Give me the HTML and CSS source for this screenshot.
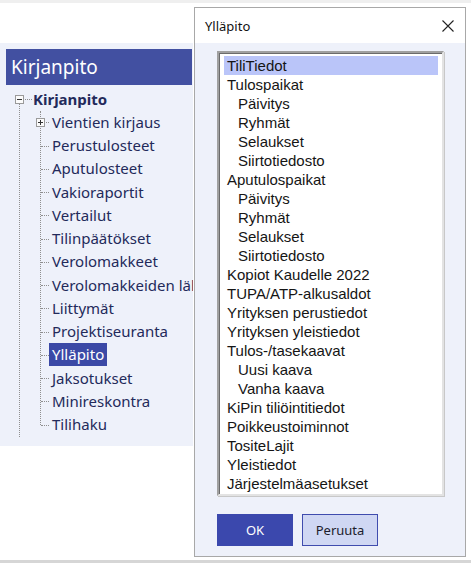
FILE: index.html
```html
<!DOCTYPE html>
<html lang="fi">
<head>
<meta charset="utf-8">
<title>Kirjanpito</title>
<link rel="stylesheet" href="styles.css">
</head>
<body>
<div class="screen">
  <div class="topline"></div>
  <div class="panel">
    <div class="panel-header">Kirjanpito</div>
    <div class="tree">
      <div class="row root">
        <svg class="box" width="9" height="9" viewBox="0 0 9 9"><rect x="0.5" y="0.5" width="8" height="8" fill="#fbfbfb" stroke="#9a9a9a"/><path d="M2 4.5h5" stroke="#333" stroke-width="1"/></svg>
        <span class="hconn root-conn"></span>
        <span class="label bold">Kirjanpito</span>
      </div>
      <div class="kids">
        <div class="row child has-box">
          <svg class="box kid-box" width="9" height="9" viewBox="0 0 9 9"><rect x="0.5" y="0.5" width="8" height="8" fill="#fbfbfb" stroke="#9a9a9a"/><path d="M2 4.5h5M4.5 2v5" stroke="#333" stroke-width="1"/></svg>
          <span class="label">Vientien kirjaus</span>
        </div>
        <div class="row child"><span class="label">Perustulosteet</span></div>
        <div class="row child"><span class="label">Aputulosteet</span></div>
        <div class="row child"><span class="label">Vakioraportit</span></div>
        <div class="row child"><span class="label">Vertailut</span></div>
        <div class="row child"><span class="label">Tilinpäätökset</span></div>
        <div class="row child"><span class="label">Verolomakkeet</span></div>
        <div class="row child"><span class="label">Verolomakkeiden lähetys</span></div>
        <div class="row child"><span class="label">Liittymät</span></div>
        <div class="row child"><span class="label">Projektiseuranta</span></div>
        <div class="row child"><span class="label selected">Ylläpito</span></div>
        <div class="row child"><span class="label">Jaksotukset</span></div>
        <div class="row child"><span class="label">Minireskontra</span></div>
        <div class="row child"><span class="label">Tilihaku</span></div>
      </div>
    </div>
  </div>
  <div class="bottomline"></div>

  <div class="dialog">
    <div class="dialog-title">
      <span class="title-text">Ylläpito</span>
      <svg class="close" width="12" height="12" viewBox="0 0 12 12"><path d="M0.5 0.5L11.5 11.5M11.5 0.5L0.5 11.5" stroke="#222" stroke-width="1.1" fill="none"/></svg>
    </div>
    <div class="dialog-body">
      <ul class="listbox">
        <li class="item sel">TiliTiedot</li>
        <li class="item">Tulospaikat</li>
        <li class="item sub">Päivitys</li>
        <li class="item sub">Ryhmät</li>
        <li class="item sub">Selaukset</li>
        <li class="item sub">Siirtotiedosto</li>
        <li class="item">Aputulospaikat</li>
        <li class="item sub">Päivitys</li>
        <li class="item sub">Ryhmät</li>
        <li class="item sub">Selaukset</li>
        <li class="item sub">Siirtotiedosto</li>
        <li class="item">Kopiot Kaudelle 2022</li>
        <li class="item">TUPA/ATP-alkusaldot</li>
        <li class="item">Yrityksen perustiedot</li>
        <li class="item">Yrityksen yleistiedot</li>
        <li class="item">Tulos-/tasekaavat</li>
        <li class="item sub">Uusi kaava</li>
        <li class="item sub">Vanha kaava</li>
        <li class="item">KiPin tiliöintitiedot</li>
        <li class="item">Poikkeustoiminnot</li>
        <li class="item">TositeLajit</li>
        <li class="item">Yleistiedot</li>
        <li class="item">Järjestelmäasetukset</li>
      </ul>
      <div class="buttons">
        <button class="btn btn-ok">OK</button>
        <button class="btn btn-cancel">Peruuta</button>
      </div>
    </div>
  </div>
</div>
</body>
</html>
```

FILE: styles.css
```css
html, body {
  margin: 0;
  padding: 0;
  background: #ffffff;
}
.screen {
  position: relative;
  width: 471px;
  height: 563px;
  overflow: hidden;
  background: #ffffff;
  font-family: "Noto Sans", "Open Sans", sans-serif;
}
.topline {
  height: 3px;
  background: #efefef;
  margin-bottom: 40px;
}
.panel {
  width: 193px;
  height: 403px;
  background: #eef1fa;
  padding-top: 6px;
  box-sizing: border-box;
  overflow: hidden;
}
.panel-header {
  margin-left: 6px;
  width: 186px;
  height: 36px;
  background: #4250a1;
  color: #ffffff;
  font-size: 19px;
  line-height: 36px;
  padding-left: 5px;
  box-sizing: border-box;
  white-space: nowrap;
}
.tree {
  position: relative;
  margin-top: 2.4px;
}
.tree::before {
  content: "";
  position: absolute;
  left: 19px;
  top: 16.5px;
  height: 333px;
  border-left: 1px dotted #8f8f8f;
}
.row {
  position: relative;
  height: 23.25px;
  display: flex;
  align-items: center;
  white-space: nowrap;
  font-size: 15px;
  color: #232a5b;
}
.root {
  padding-left: 15px;
}
.box {
  display: block;
  flex: none;
}
.hconn {
  display: block;
  border-top: 1px dotted #8f8f8f;
}
.root-conn {
  width: 7px;
  margin-left: 1px;
  margin-right: 1px;
}
.bold {
  font-weight: 700;
}
.kids {
  position: relative;
}
.kids::before {
  content: "";
  position: absolute;
  left: 40px;
  top: 0;
  bottom: 11.6px;
  border-left: 1px dotted #8f8f8f;
}
.child {
  padding-left: 52px;
}
.child::before {
  content: "";
  position: absolute;
  left: 41px;
  width: 8px;
  top: 50%;
  border-top: 1px dotted #8f8f8f;
}
.kid-box {
  position: absolute;
  left: 36px;
  top: 7px;
  z-index: 1;
}
.label {
  display: block;
  height: 23px;
  line-height: 23px;
}
.selected {
  background: #3b49a6;
  color: #ffffff;
  padding: 0 3px;
  margin-left: -3px;
}
.bottomline {
  position: absolute;
  left: 0;
  right: 0;
  bottom: 0;
  height: 3px;
  background: #d6d6d6;
}

/* Dialog window */
.dialog {
  position: absolute;
  left: 194px;
  top: 7px;
  width: 272px;
  height: 550px;
  border: 1px solid #a8a8a8;
  box-sizing: border-box;
  display: flex;
  flex-direction: column;
  background: #eef1fa;
}
.dialog-title {
  height: 35px;
  background: #ffffff;
  display: flex;
  align-items: center;
  justify-content: space-between;
  padding: 0 11px 0 10px;
  flex: none;
}
.title-text {
  font-size: 13px;
  color: #111111;
}
.close {
  display: block;
}
.dialog-body {
  flex: 1;
  padding: 8px 0 0 22px;
}
.listbox {
  list-style: none;
  margin: 0;
  padding: 3px 4px 0 5px;
  width: 227px;
  height: 445px;
  box-sizing: border-box;
  background: #ffffff;
  border: 2px solid;
  border-color: #a0a0a0 #e3e3e3 #e3e3e3 #a0a0a0;
  box-shadow: inset 1px 1px 0 #6b6b6b, 1px 1px 0 #c8c8c8;
  font-family: "Liberation Sans", Arial, sans-serif;
  font-size: 15px;
  color: #151515;
}
.item {
  height: 19px;
  line-height: 19px;
  padding-left: 3px;
  white-space: nowrap;
}
.item.sub {
  padding-left: 14px;
}
.item.sel {
  background: #bac5f9;
}
.buttons {
  display: flex;
  gap: 9px;
  margin-top: 18px;
}
.btn {
  width: 76px;
  height: 32px;
  box-sizing: border-box;
  font-family: "Noto Sans", "Open Sans", sans-serif;
  font-size: 13px;
  padding: 0;
  margin: 0;
}
.btn-ok {
  background: #3b48ad;
  color: #ffffff;
  border: 1px solid #3b48ad;
}
.btn-cancel {
  background: #cfd7f3;
  color: #1c1c2c;
  border: 1px solid #3f4cae;
}
```
